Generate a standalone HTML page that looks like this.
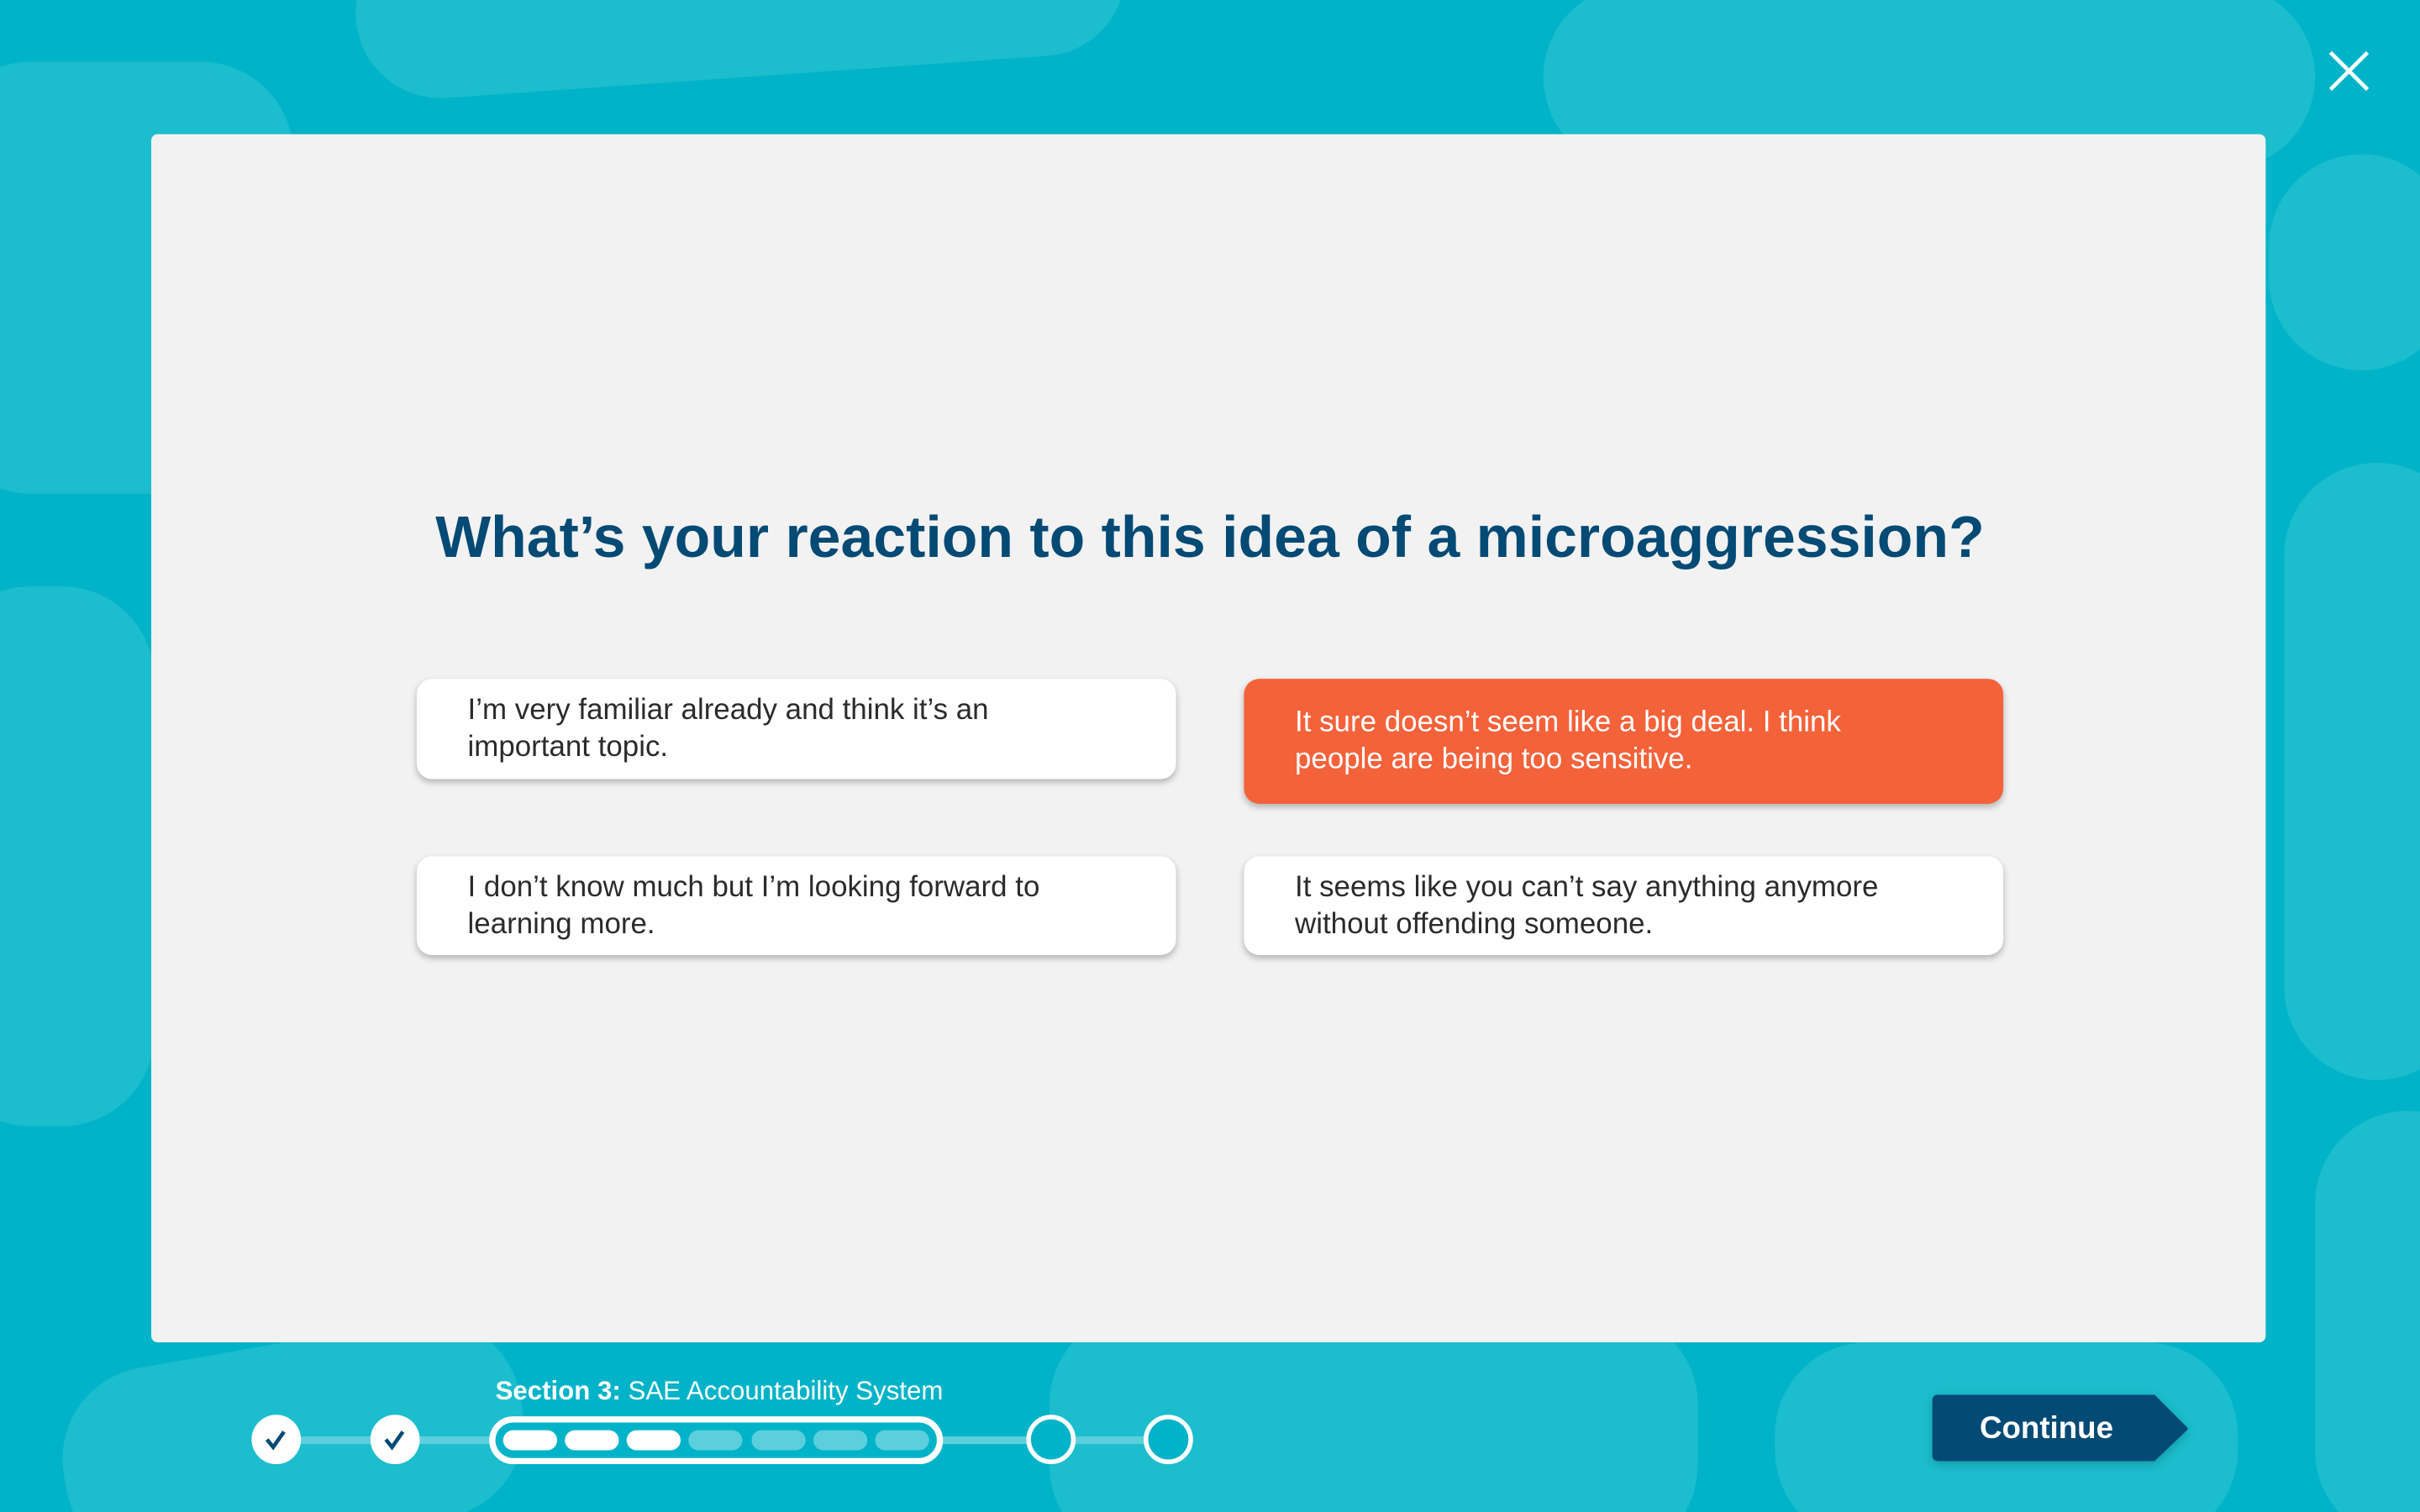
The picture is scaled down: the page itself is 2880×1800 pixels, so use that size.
<!DOCTYPE html>
<html><head><style>
html,body{margin:0;padding:0;width:2880px;height:1800px;overflow:hidden;background:#00b3c8;}
#s{position:absolute;left:0;top:0;width:1568px;height:980px;transform:scale(1.836735);transform-origin:0 0;font-family:"Liberation Sans",sans-serif;overflow:hidden;}
.sh{position:absolute;background:#1cbdcd;border-radius:60px;}
.card{position:absolute;left:98px;top:87px;width:1370px;height:783px;background:#f2f2f2;border-radius:4px;}
h1{position:absolute;left:0;width:1568px;top:328px;margin:0;text-align:center;font-size:38px;color:#034a75;font-weight:bold;}
.opt{position:absolute;width:492px;background:#fff;border-radius:10px;box-shadow:0 2px 4px rgba(0,0,0,.25);font-size:19px;line-height:24px;color:#2b2b2b;padding:9px 70px 9px 33px;box-sizing:border-box;}
.sel{background:#f4623a;color:#fff;padding-top:17px;}
.dot{position:absolute;width:32px;height:32px;border-radius:50%;background:#fff;top:917px;box-sizing:border-box;}
.o{background:transparent;border:3.5px solid #fff;}
.line{position:absolute;height:5px;background:#5ccfdc;top:931px;}
.seg{position:absolute;top:927px;width:35px;height:13px;border-radius:7px;background:#fff;}
.l{background:#5ccfdc;}
</style></head><body><div id="s">
<div class="sh" style="left:230px;top:-60px;width:500px;height:110px;transform:rotate(-4deg)"></div>
<div class="sh" style="left:1000px;top:-10px;width:500px;height:120px;"></div>
<div class="sh" style="left:-40px;top:40px;width:230px;height:280px;"></div>
<div class="sh" style="left:1470px;top:100px;width:120px;height:140px;"></div>
<div class="sh" style="left:1480px;top:300px;width:120px;height:400px;"></div>
<div class="sh" style="left:-40px;top:380px;width:140px;height:350px;"></div>
<div class="sh" style="left:1500px;top:720px;width:120px;height:280px;"></div>
<div class="sh" style="left:40px;top:870px;width:300px;height:130px;transform:rotate(-10deg)"></div>
<div class="sh" style="left:680px;top:850px;width:420px;height:160px;"></div>
<div class="sh" style="left:1150px;top:870px;width:300px;height:130px;"></div>
<div class="card"></div>
<h1>What’s your reaction to this idea of a microaggression?</h1>
<div class="opt" style="left:270px;top:440px;height:65px">I’m very familiar already and think it’s an important topic.</div>
<div class="opt sel" style="left:806px;top:440px;height:81px;padding-right:80px">It sure doesn’t seem like a big deal. I think people are being too sensitive.</div>
<div class="opt" style="left:270px;top:555px;height:64px">I don’t know much but I’m looking forward to learning more.</div>
<div class="opt" style="left:806px;top:555px;height:64px">It seems like you can’t say anything anymore without offending someone.</div>
<svg style="position:absolute;left:1508px;top:32px" width="28" height="28" viewBox="0 0 28 28"><path d="M2 2L26 26M26 2L2 26" stroke="#fff" stroke-width="2.5"/></svg>
<div style="position:absolute;left:321px;top:892px;font-size:17px;color:#fff;"><b>Section 3:</b> SAE Accountability System</div>
<div class="line" style="left:190px;width:560px"></div>
<div class="dot" style="left:163px"><svg width="32" height="32"><path d="M10 16l4 5 7-10" stroke="#034a75" stroke-width="2.5" fill="none"/></svg></div>
<div class="dot" style="left:240px"><svg width="32" height="32"><path d="M10 16l4 5 7-10" stroke="#034a75" stroke-width="2.5" fill="none"/></svg></div>
<div style="position:absolute;left:317px;top:918px;width:294px;height:31px;border:4px solid #fff;border-radius:16px;box-sizing:border-box;background:#00b3c8"></div>
<div class="seg" style="left:326px"></div><div class="seg" style="left:366px"></div><div class="seg" style="left:406px"></div>
<div class="seg l" style="left:446px"></div><div class="seg l" style="left:487px"></div><div class="seg l" style="left:527px"></div><div class="seg l" style="left:567px"></div>
<div class="dot o" style="left:665px;background:#00b3c8"></div>
<div class="dot o" style="left:741px;background:#00b3c8"></div>
<svg style="position:absolute;left:1252px;top:904px;filter:drop-shadow(0 2px 3px rgba(0,0,0,.2))" width="168" height="44"><path d="M4 0H144L165 21Q166 22 165 23L144 43H4Q0 43 0 39V4Q0 0 4 0Z" fill="#034a75"/><text x="74" y="28" font-family="Liberation Sans" font-size="20" font-weight="bold" fill="#fff" text-anchor="middle">Continue</text></svg>
</div></body></html>
